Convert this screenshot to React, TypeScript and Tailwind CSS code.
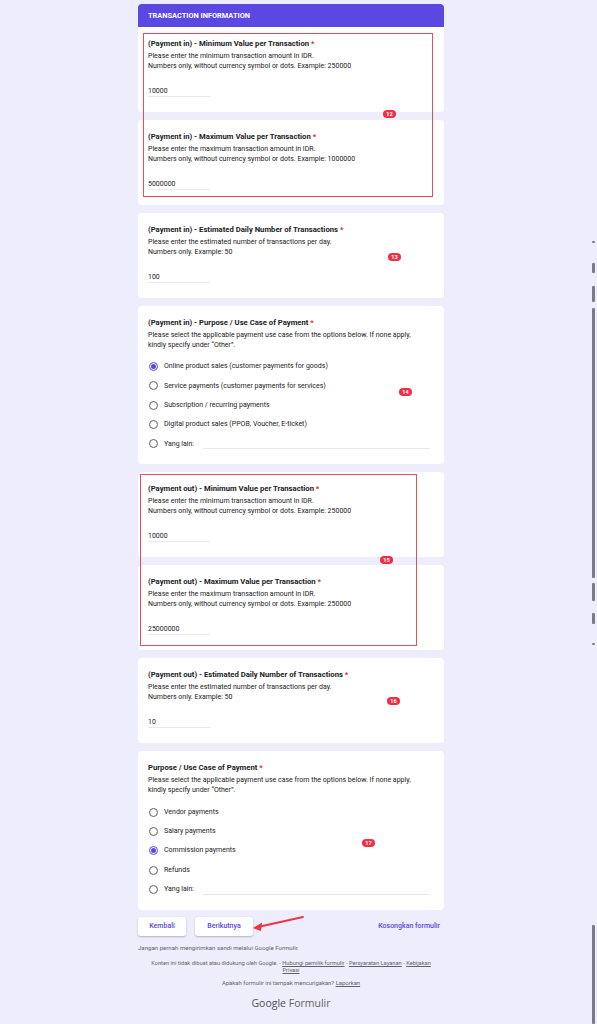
import React from "react";

type TextQuestion = {
  title: string;
  desc: string[];
  value: string;
};

function Title({ children }: { children: React.ReactNode }) {
  return (
    <div className="text-[7.7px] leading-[10px] font-bold text-[#202124]">
      {children} <span className="text-[#d93025]">*</span>
    </div>
  );
}

function Desc({ lines }: { lines: string[] }) {
  return (
    <div className="mt-[3px] text-[7px] leading-[9.5px] text-[#202124]">
      {lines.map((l) => (
        <div key={l}>{l}</div>
      ))}
    </div>
  );
}

function TextBody({ q }: { q: TextQuestion }) {
  return (
    <div className="px-[10px] pt-[12px] pb-[15px]">
      <Title>{q.title}</Title>
      <Desc lines={q.desc} />
      <div className="mt-[15px] w-[62px] border-b border-[#e8e8ec] text-[7px] leading-[10px] text-[#202124]">
        {q.value}
      </div>
    </div>
  );
}

function Card({ children }: { children: React.ReactNode }) {
  return <div className="bg-white rounded-[4px] overflow-hidden">{children}</div>;
}

function Radio({ checked }: { checked?: boolean }) {
  return checked ? (
    <span className="w-[9px] h-[9px] rounded-full border border-[#5b48e3] flex items-center justify-center shrink-0">
      <span className="w-[4.5px] h-[4.5px] rounded-full bg-[#5b48e3]" />
    </span>
  ) : (
    <span className="w-[9px] h-[9px] rounded-full border border-[#5f6368] shrink-0" />
  );
}

function ChoiceCard({ title, options, selected }: { title: string; options: string[]; selected: number }) {
  return (
    <Card>
      <div className="px-[10px] pt-[12px] pb-[11px]">
        <Title>{title}</Title>
        <Desc
          lines={[
            "Please select the applicable payment use case from the options below. If none apply,",
            "kindly specify under \u201COther\u201D.",
          ]}
        />
        <div className="mt-[7px] flex flex-col">
          {options.map((o, i) => (
            <div key={o} className="h-[19.3px] flex items-center gap-[6px] pl-px text-[7px] text-[#202124]">
              <Radio checked={i === selected} />
              <span>{o}</span>
            </div>
          ))}
          <div className="h-[19.3px] flex items-center gap-[6px] pl-px text-[7px] text-[#202124]">
            <Radio />
            <span className="w-[33px]">Yang lain:</span>
            <span className="flex-1 mr-[4px] mt-[10px] border-b border-[#e8e8ec]" />
          </div>
        </div>
      </div>
    </Card>
  );
}

function Badge({ n, className }: { n: number; className: string }) {
  return (
    <span
      className={`absolute h-[8px] w-[13px] rounded-full bg-[#ef2f45] text-white text-[5.5px] font-bold leading-[8px] text-center ${className}`}
    >
      {n}
    </span>
  );
}

const scrollMarks = [
  [241, 2],
  [263, 10],
  [286, 16],
  [308, 270],
  [583, 18],
  [613, 11],
  [643, 2],
  [925, 99],
];

export default function App() {
  const minIn: TextQuestion = {
    title: "(Payment in) - Minimum Value per Transaction",
    desc: ["Please enter the minimum transaction amount in IDR.", "Numbers only, without currency symbol or dots. Example: 250000"],
    value: "10000",
  };
  const maxIn: TextQuestion = {
    title: "(Payment in) - Maximum Value per Transaction",
    desc: ["Please enter the maximum transaction amount in IDR.", "Numbers only, without currency symbol or dots. Example: 1000000"],
    value: "5000000",
  };
  const dailyIn: TextQuestion = {
    title: "(Payment in) - Estimated Daily Number of Transactions",
    desc: ["Please enter the estimated number of transactions per day.", "Numbers only. Example: 50"],
    value: "100",
  };
  const minOut: TextQuestion = {
    title: "(Payment out) - Minimum Value per Transaction",
    desc: ["Please enter the minimum transaction amount in IDR.", "Numbers only, without currency symbol or dots. Example: 250000"],
    value: "10000",
  };
  const maxOut: TextQuestion = {
    title: "(Payment out) - Maximum Value per Transaction",
    desc: ["Please enter the maximum transaction amount in IDR.", "Numbers only, without currency symbol or dots. Example: 250000"],
    value: "25000000",
  };
  const dailyOut: TextQuestion = {
    title: "(Payment out) - Estimated Daily Number of Transactions",
    desc: ["Please enter the estimated number of transactions per day.", "Numbers only. Example: 50"],
    value: "10",
  };

  return (
    <div className="relative min-h-screen w-[597px] bg-[#eeedfb] font-['Roboto','Liberation_Sans',sans-serif] pr-[15px]">
      <div className="relative mx-auto w-[306px] pt-[4px] pb-[14px] flex flex-col">
        <div className="flex flex-col gap-[8px]">
          <Card>
            <div className="h-[23px] bg-[#5b48e3] px-[10px] flex items-center text-white text-[7.4px] font-bold">
              TRANSACTION INFORMATION
            </div>
            <TextBody q={minIn} />
          </Card>
          <Card>
            <TextBody q={maxIn} />
          </Card>
          <Card>
            <TextBody q={dailyIn} />
          </Card>
          <ChoiceCard
            title="(Payment in) - Purpose / Use Case of Payment"
            options={[
              "Online product sales (customer payments for goods)",
              "Service payments (customer payments for services)",
              "Subscription / recurring payments",
              "Digital product sales (PPOB, Voucher, E-ticket)",
            ]}
            selected={0}
          />
          <Card>
            <TextBody q={minOut} />
          </Card>
          <Card>
            <TextBody q={maxOut} />
          </Card>
          <Card>
            <TextBody q={dailyOut} />
          </Card>
          <ChoiceCard
            title="Purpose / Use Case of Payment"
            options={["Vendor payments", "Salary payments", "Commission payments", "Refunds"]}
            selected={2}
          />
        </div>

        {/* navigation */}
        <div className="mt-[7px] flex items-center">
          <button className="h-[19px] w-[48px] rounded-[3px] bg-white shadow-[0_1px_2px_rgba(0,0,0,0.25)] text-[7px] font-medium text-[#5b48e3]">
            Kembali
          </button>
          <button className="ml-[9px] h-[19px] w-[58px] rounded-[3px] bg-white shadow-[0_1px_2px_rgba(0,0,0,0.25)] text-[7px] font-medium text-[#5b48e3]">
            Berikutnya
          </button>
          <span className="ml-auto mr-[4px] text-[7px] font-medium text-[#5b48e3]">Kosongkan formulir</span>
        </div>

        {/* footer */}
        <div className="mt-[8px] text-[6.1px] leading-[8px] text-[#5f6368]">
          Jangan pernah mengirimkan sandi melalui Google Formulir.
        </div>
        <div className="mt-[8px] px-[6px] text-center text-[5.7px] leading-[7.5px] text-[#5f6368]">
          Konten ini tidak dibuat atau didukung oleh Google. - <span className="underline">Hubungi pemilik formulir</span> -{" "}
          <span className="underline">Persyaratan Layanan</span> - <span className="underline">Kebijakan</span>{" "}
          <span className="underline">Privasi</span>
        </div>
        <div className="mt-[4px] text-center text-[5.9px] leading-[8px] text-[#5f6368]">
          Apakah formulir ini tampak mencurigakan? <span className="underline">Laporkan</span>
        </div>
        <div className="mt-[9px] text-center text-[10.5px] leading-[14px] text-[#5f6368] font-['Open_Sans','Roboto',sans-serif]">
          <span className="text-[#4d5156]">Google</span> <span>Formulir</span>
        </div>

        {/* review markup on top of the form */}
        <div className="absolute left-[5px] top-[33px] w-[290px] h-[164px] border-[1.5px] border-[#f04a5a] pointer-events-none" />
        <div className="absolute left-[2px] top-[474px] w-[277px] h-[172px] border-[1.5px] border-[#f04a5a] pointer-events-none" />
        <Badge n={12} className="left-[245px] top-[110px]" />
        <Badge n={13} className="left-[250px] top-[253px]" />
        <Badge n={14} className="left-[261px] top-[388px]" />
        <Badge n={15} className="left-[242px] top-[556px]" />
        <Badge n={16} className="left-[249px] top-[697px]" />
        <Badge n={17} className="left-[224px] top-[839px]" />
        <svg className="absolute left-[112px] top-[915px]" width="56" height="18" viewBox="0 0 56 18">
          <path d="M53 2 L8 12" stroke="#ef3347" strokeWidth="1.8" strokeLinecap="round" />
          <path d="M3 13 L12 7.5 L11 16 Z" fill="#ef3347" />
        </svg>
      </div>

      {scrollMarks.map(([top, h]) => (
        <span
          key={top}
          className="absolute left-[592px] w-[3px] rounded-[1px] bg-[#7b7a88]"
          style={{ top, height: h }}
        />
      ))}
    </div>
  );
}
